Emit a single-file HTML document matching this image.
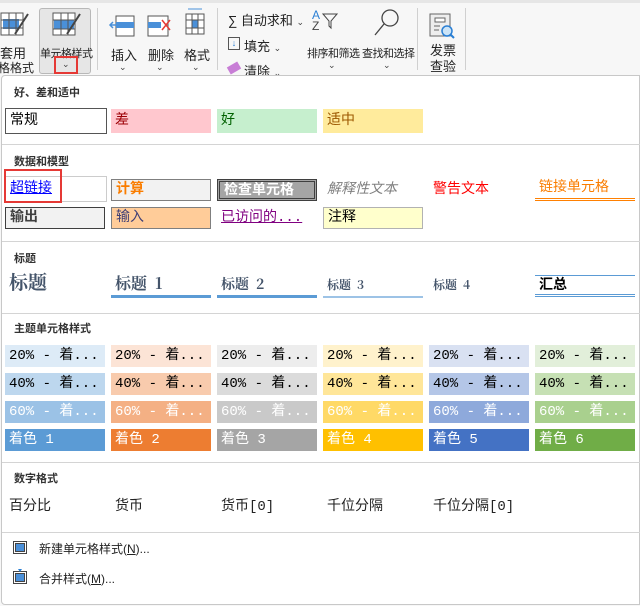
<!DOCTYPE html><html><head><meta charset="utf-8"><style>
*{margin:0;padding:0;box-sizing:border-box}
body{width:640px;height:606px;overflow:hidden;background:#f7f7f7;font-family:"Liberation Sans","Noto Sans CJK SC",sans-serif;position:relative;color:#222}
.a{position:absolute;white-space:nowrap}
.rb{font-size:13px;color:#222}
.n{font-size:11px;letter-spacing:-0.5px}
.panel{position:absolute;left:1px;top:75px;width:639px;height:530px;background:#fff;border:1px solid #c8c8c8;border-radius:4px 0 0 4px}
.h{position:absolute;left:14px;font-size:11px;font-weight:bold;color:#333}
.sep{position:absolute;left:2px;right:0;height:1px;background:#d4d4d4}
.c{position:absolute;width:100px;height:24px;font-family:"Liberation Mono","Noto Sans CJK SC",monospace;font-size:14px;line-height:24px;padding-left:4px;overflow:hidden}
.chev{font-size:9px;color:#444}
</style></head><body>
<div class="a" style="left:0;top:0;width:640px;height:3px;background:#e6e6e6"></div>
<svg class="a" style="left:0;top:12px" width="30" height="28"><rect x="1" y="1" width="22" height="22" fill="#fff" stroke="#555"/><rect x="3" y="7" width="16" height="10" fill="#4a90d9"/><path d="M1 8H23M1 16H23M9 1V23M16 1V23" stroke="#555"/><path d="M28 2L15 22" stroke="#444" stroke-width="2"/></svg>
<div class="a rb" style="left:0;top:43px">套用</div>
<div class="a rb" style="left:-2px;top:59px;font-size:12px">格格式 <span class="chev">⌄</span></div>
<div class="a" style="left:39px;top:8px;width:52px;height:66px;background:#e6e6e6;border:1px solid #b8b8b8;border-radius:3px"></div>
<svg class="a" style="left:52px;top:12px" width="30" height="28"><rect x="1" y="1" width="22" height="22" fill="#fff" stroke="#555"/><rect x="2" y="8" width="20" height="9" fill="#4a90d9"/><path d="M1 8H23M1 17H23M9 1V23M16 1V23" stroke="#555"/><path d="M28 2L15 22" stroke="#444" stroke-width="2"/></svg>
<div class="a rb n" style="left:40px;top:45px">单元格样式</div>
<div class="a" style="left:54px;top:56px;width:24px;height:18px;border:2px solid #e53935"></div>
<div class="a chev" style="left:62px;top:59px">⌄</div>
<div class="a" style="left:97px;top:8px;width:1px;height:62px;background:#d0d0d0"></div>
<svg class="a" style="left:108px;top:14px" width="28" height="24"><rect x="8" y="2" width="18" height="20" fill="#fff" stroke="#555"/><rect x="8" y="8" width="18" height="6" fill="#4a90d9"/><path d="M2 11H14M5 8L2 11L5 14" stroke="#4a90d9" fill="none" stroke-width="1.5"/></svg>
<div class="a rb" style="left:111px;top:45px">插入</div><div class="a chev" style="left:119px;top:62px">⌄</div>
<svg class="a" style="left:146px;top:14px" width="28" height="24"><rect x="2" y="2" width="20" height="20" fill="#fff" stroke="#555"/><rect x="2" y="8" width="13" height="6" fill="#4a90d9"/><path d="M16 6L24 16M24 6L16 16" stroke="#e53935" stroke-width="1.5"/></svg>
<div class="a rb" style="left:148px;top:45px">删除</div><div class="a chev" style="left:156px;top:62px">⌄</div>
<svg class="a" style="left:182px;top:6px" width="26" height="30"><path d="M6 3H20" stroke="#4a90d9"/><rect x="4" y="8" width="18" height="20" fill="#fff" stroke="#555"/><rect x="10" y="14" width="6" height="8" fill="#4a90d9"/><path d="M4 14H22M4 22H22M10 8V28M16 8V28" stroke="#555"/></svg>
<div class="a rb" style="left:184px;top:45px">格式</div><div class="a chev" style="left:192px;top:62px">⌄</div>
<div class="a" style="left:217px;top:8px;width:1px;height:62px;background:#d0d0d0"></div>
<div class="a rb" style="left:228px;top:10px">∑ 自动求和 <span class="chev">⌄</span></div>
<div class="a" style="left:228px;top:37px;width:12px;height:13px;border:1px solid #555;font-size:9px;color:#2a7fd4;text-align:center;line-height:11px">↓</div>
<div class="a rb" style="left:244px;top:36px">填充 <span class="chev">⌄</span></div>
<div class="a" style="left:228px;top:64px;width:12px;height:8px;background:#c87ed6;transform:rotate(-30deg)"></div>
<div class="a rb" style="left:244px;top:61px">清除 <span class="chev">⌄</span></div>
<div class="a" style="left:312px;top:10px;font-size:12px;color:#2a7fd4;line-height:11px">A<br><span style="color:#444">Z</span></div>
<svg class="a" style="left:322px;top:12px" width="16" height="18"><path d="M1 2H15L9 9V16L7 14V9Z" fill="none" stroke="#444"/></svg>
<div class="a rb n" style="left:307px;top:45px">排序和筛选</div><div class="a chev" style="left:328px;top:60px">⌄</div>
<svg class="a" style="left:372px;top:8px" width="28" height="30"><circle cx="18" cy="10" r="8" fill="none" stroke="#444" stroke-width="1.3"/><path d="M12 16L3 27" stroke="#444" stroke-width="1.3"/></svg>
<div class="a rb n" style="left:362px;top:45px">查找和选择</div><div class="a chev" style="left:383px;top:60px">⌄</div>
<div class="a" style="left:417px;top:8px;width:1px;height:62px;background:#d0d0d0"></div>
<svg class="a" style="left:428px;top:12px" width="28" height="28"><rect x="2" y="2" width="20" height="22" fill="#eee" stroke="#666"/><rect x="7" y="6" width="10" height="4" fill="#fff" stroke="#666"/><path d="M6 14H12M6 18H11" stroke="#666"/><circle cx="19" cy="19" r="5" fill="#cce4f7" stroke="#2a7fd4" stroke-width="1.5"/><path d="M22 22L26 26" stroke="#2a7fd4" stroke-width="2"/></svg>
<div class="a rb" style="left:430px;top:43px;line-height:16px">发票<br>查验</div>
<div class="a" style="left:465px;top:8px;width:1px;height:62px;background:#d0d0d0"></div>

<div class="panel"></div>
<div class="h" style="top:84px">好、差和适中</div>
<div class="c" style="left:5px;top:108px;width:102px;height:26px;border:1px solid #555;color:#000">常规</div>
<div class="c" style="left:111px;top:109px;background:#ffc7ce;color:#9c0006">差</div>
<div class="c" style="left:217px;top:109px;background:#c6efce;color:#006100">好</div>
<div class="c" style="left:323px;top:109px;background:#ffeb9c;color:#9c5700">适中</div>
<div class="sep" style="top:144px"></div>
<div class="h" style="top:153px">数据和模型</div>
<div class="c" style="left:5px;top:176px;width:102px;height:26px;border:1px solid #ccc;color:#0000ff;text-decoration:underline">超链接</div>
<div class="a" style="left:4px;top:169px;width:58px;height:34px;border:2px solid #e53935"></div>
<div class="c" style="left:111px;top:179px;height:22px;line-height:20px;background:#f2f2f2;border:1px solid #7f7f7f;color:#fa7d00;font-weight:bold">计算</div>
<div class="c" style="left:217px;top:179px;height:22px;line-height:18px;background:#a5a5a5;border:3px double #3f3f3f;color:#fff;font-weight:bold">检查单元格</div>
<div class="c" style="left:323px;top:178px;color:#7f7f7f;font-style:italic">解释性文本</div>
<div class="c" style="left:429px;top:178px;color:#ff0000">警告文本</div>
<div class="c" style="left:535px;top:176px;color:#fa7d00;border-bottom:3px double #ff8001;height:25px">链接单元格</div>
<div class="c" style="left:5px;top:207px;height:22px;line-height:20px;background:#f2f2f2;border:1px solid #3f3f3f;color:#3f3f3f;font-weight:bold">输出</div>
<div class="c" style="left:111px;top:207px;height:22px;line-height:20px;background:#ffcc99;border:1px solid #7f7f7f;color:#3f3f76">输入</div>
<div class="c" style="left:217px;top:206px;color:#800080;text-decoration:underline">已访问的...</div>
<div class="c" style="left:323px;top:207px;height:22px;line-height:20px;background:#ffffcc;border:1px solid #b2b2b2;color:#000">注释</div>
<div class="sep" style="top:241px"></div>
<div class="h" style="top:250px">标题</div>
<div class="c" style="left:5px;top:270px;font-size:19px;font-weight:bold;color:#44546a;font-family:'Noto Serif CJK SC',serif">标题</div>
<div class="c" style="left:111px;top:271px;font-size:16px;font-weight:bold;color:#44546a;border-bottom:3px solid #5b9bd5;height:27px;font-family:'Noto Serif CJK SC',serif">标题 &nbsp;1</div>
<div class="c" style="left:217px;top:272px;font-size:14px;font-weight:bold;color:#44546a;border-bottom:3px solid #5b9bd5;height:26px;font-family:'Noto Serif CJK SC',serif">标题 &nbsp;2</div>
<div class="c" style="left:323px;top:273px;font-size:12px;font-weight:bold;color:#44546a;border-bottom:2px solid #9dc3e6;height:25px;font-family:'Noto Serif CJK SC',serif">标题 &nbsp;3</div>
<div class="c" style="left:429px;top:273px;font-size:12px;font-weight:bold;color:#44546a;font-family:'Noto Serif CJK SC',serif">标题 &nbsp;4</div>
<div class="c" style="left:535px;top:275px;font-size:14px;font-weight:bold;color:#000;border-top:1px solid #5b9bd5;border-bottom:3px double #5b9bd5;height:22px;line-height:20px">汇总</div>
<div class="sep" style="top:313px"></div>
<div class="h" style="top:320px">主题单元格样式</div>
<div id="t"></div>
<script>
var cols=[["#ddebf7","#bdd7ee","#9bc2e6","#5b9bd5"],["#fce4d6","#f8cbad","#f4b084","#ed7d31"],["#ededed","#dbdbdb","#c9c9c9","#a5a5a5"],["#fff2cc","#ffe699","#ffd966","#ffc000"],["#d9e1f2","#b4c6e7","#8ea9db","#4472c4"],["#e2efda","#c6e0b4","#a9d08e","#70ad47"]];
var h="",tops=[345,373,401,429],lb=["20% - 着...","40% - 着...","60% - 着...",""];
for(var i=0;i<6;i++)for(var j=0;j<4;j++){var t=j==3?"着色 "+(i+1):lb[j];var col=j>=2?"#fff":"#000";
h+='<div class="c" style="left:'+(5+i*106)+'px;top:'+tops[j]+'px;height:22px;line-height:22px;background:'+cols[i][j]+';color:'+col+'">'+t+'</div>';}
document.getElementById("t").innerHTML=h;
</script>
<div class="sep" style="top:462px"></div>
<div class="h" style="top:470px">数字格式</div>
<div class="c" style="left:5px;top:495px">百分比</div>
<div class="c" style="left:111px;top:495px">货币</div>
<div class="c" style="left:217px;top:495px">货币[0]</div>
<div class="c" style="left:323px;top:495px">千位分隔</div>
<div class="c" style="left:429px;top:495px">千位分隔[0]</div>
<div class="sep" style="top:532px"></div>
<svg class="a" style="left:13px;top:541px" width="14" height="13"><rect x="0.5" y="0.5" width="13" height="12" fill="#fff" stroke="#444"/><rect x="2.5" y="2.5" width="9" height="8" fill="#4a90d9" stroke="#444"/></svg>
<div class="a" style="left:39px;top:540px;font-size:12px">新建单元格样式(<u>N</u>)...</div>
<svg class="a" style="left:13px;top:569px" width="14" height="15"><rect x="0.5" y="2.5" width="13" height="12" fill="#fff" stroke="#444"/><rect x="2.5" y="4.5" width="9" height="8" fill="#4a90d9" stroke="#444"/><path d="M5 0H9L7 3Z" fill="#2a7fd4"/></svg>
<div class="a" style="left:39px;top:570px;font-size:12px">合并样式(<u>M</u>)...</div>
</body></html>
